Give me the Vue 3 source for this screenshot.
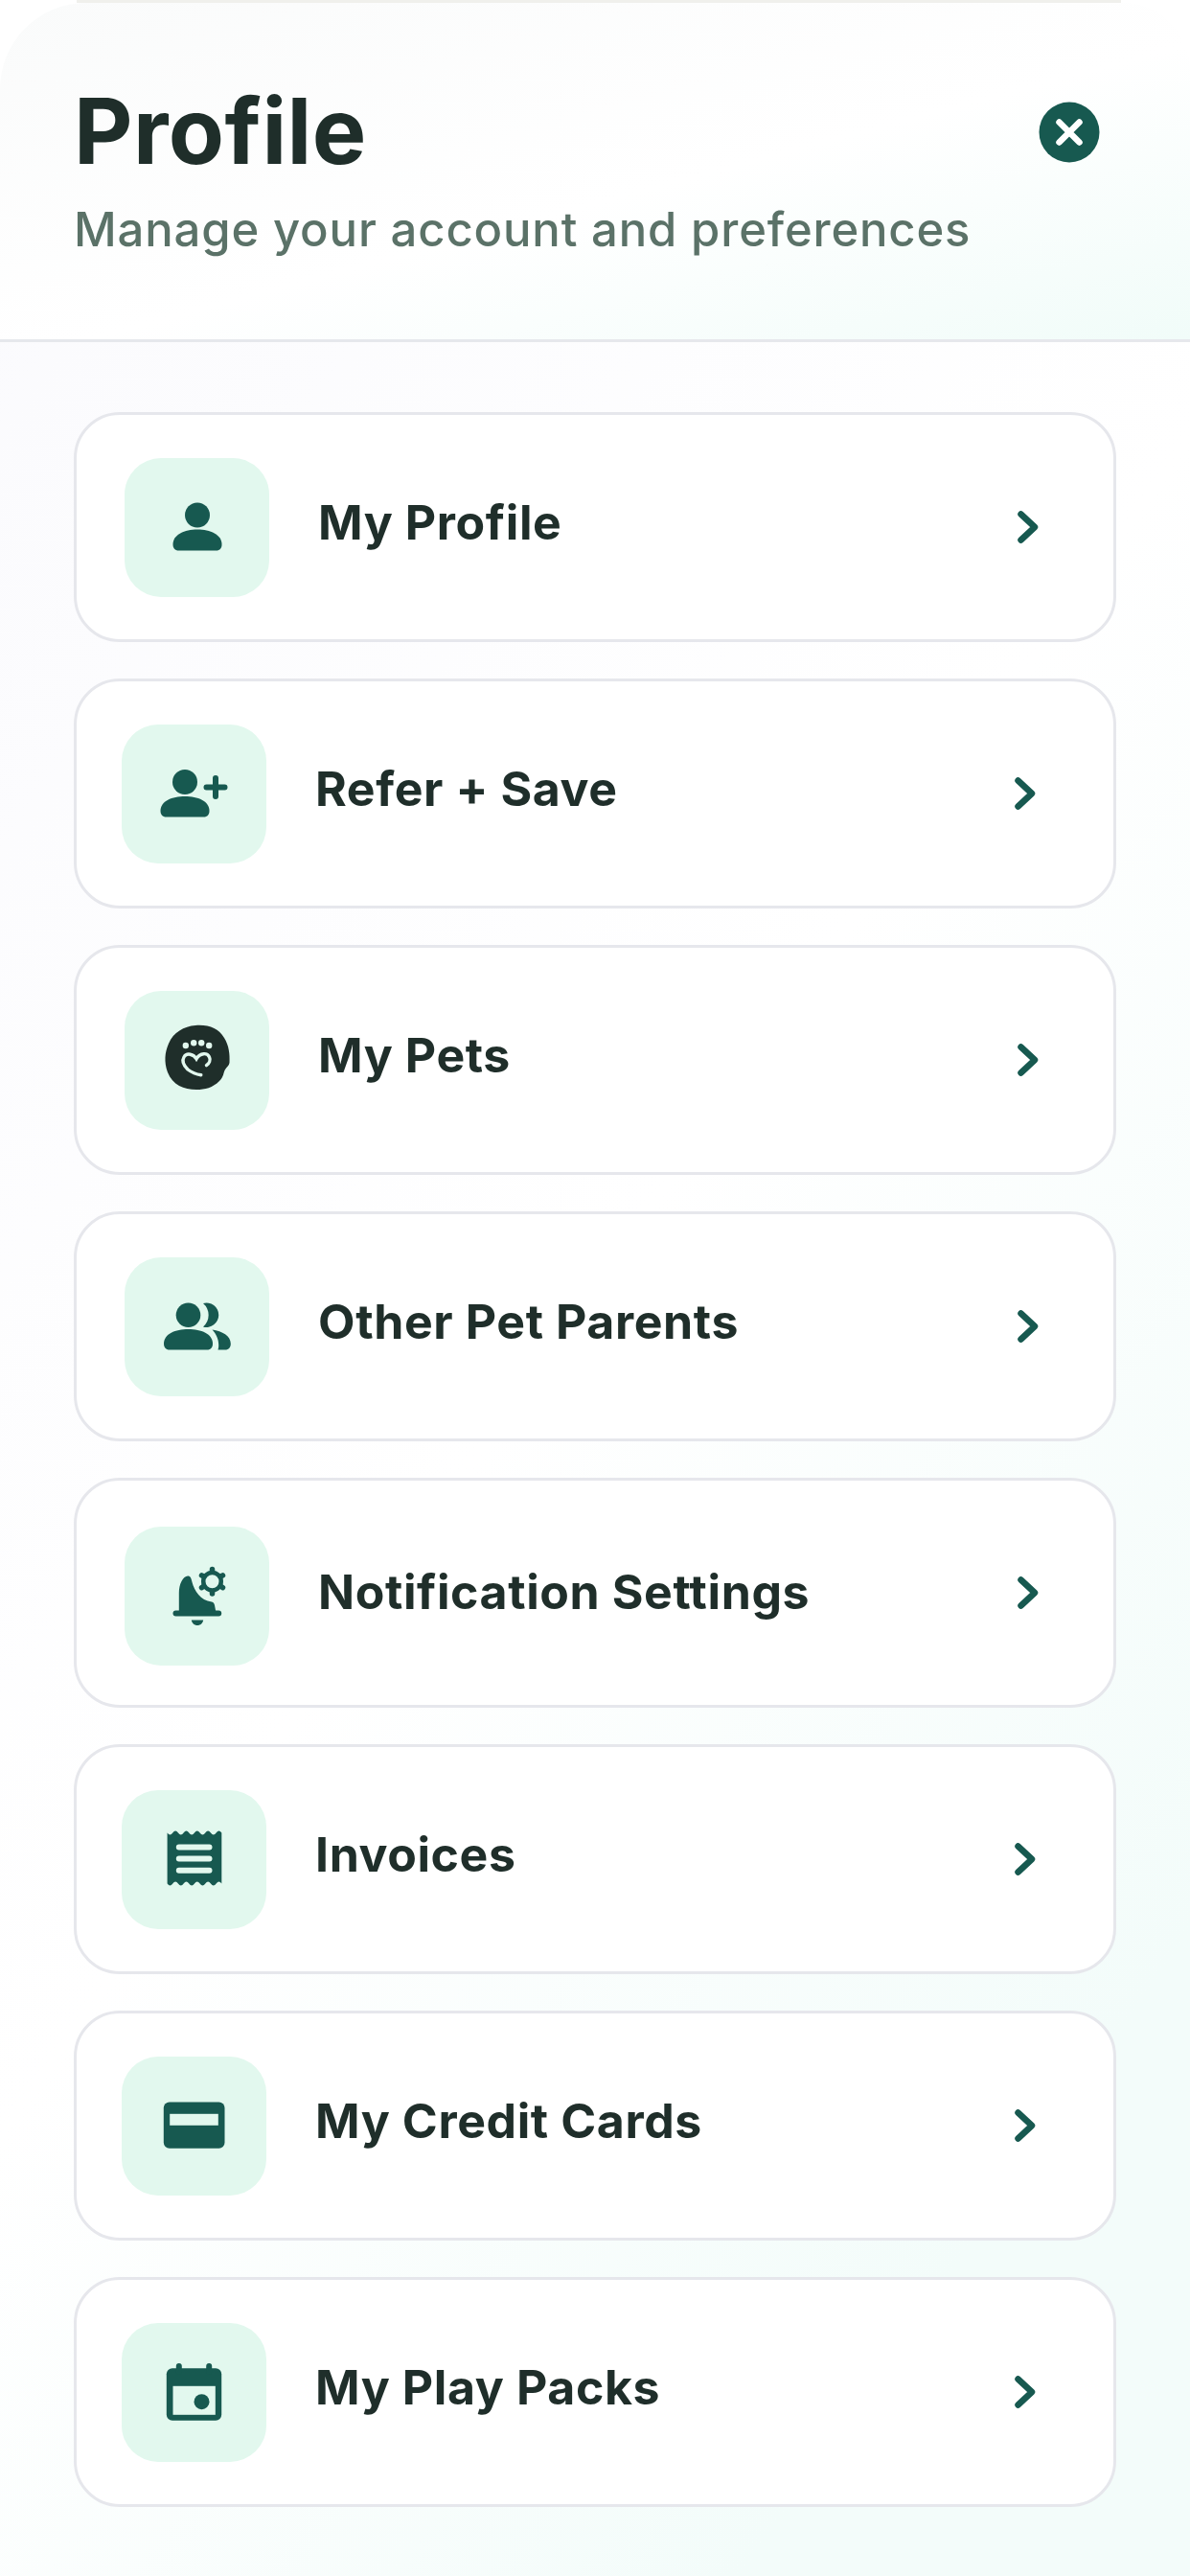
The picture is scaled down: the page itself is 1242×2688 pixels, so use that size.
<template>
  <div class="page">
    <div class="head-wrap">
      <div class="top-line"></div>
      <header class="sheet-head">
        <div class="head-text">
          <h1>Profile</h1>
          <p>Manage your account and preferences</p>
        </div>
        <button class="close-btn" aria-label="Close">
          <svg viewBox="0 0 64 64" width="64" height="64">
            <circle cx="32" cy="32" r="31.5" fill="#175950" />
            <path d="M21.5 21.5l21 21M42.5 21.5l-21 21" stroke="#fff" stroke-width="6.5" stroke-linecap="round" />
          </svg>
        </button>
      </header>
    </div>

    <main class="menu">
      <a v-for="item in items" :key="item.label" class="row" :class="{ shifted: item.shifted }">
        <span class="tile" :class="item.tileClass">
          <svg viewBox="-40 -40 80 80" width="80" height="80">
            <template v-if="item.icon === 'person'">
              <circle cy="-12.5" r="13" class="ink" />
              <path d="M-25.500 18c0-10 12-15.500 25.500-15.500s25.500 5.500 25.500 15.500c0 4-2 6.500-6 6.500h-39c-4 0-6-2.500-6-6.500z" class="ink" />
            </template>
            <template v-else-if="item.icon === 'refer'">
              <circle cx="-10" cy="-12" r="13" class="ink" />
              <path d="M-35.500 18c0-10 12-15 25.500-15s25.500 5 25.500 15c0 4-2 6.500-6 6.500h-39c-4 0-6-2.500-6-6.500z" class="ink" />
              <path d="M12.500-6.500h19M22-16v19" class="line" />
            </template>
            <template v-else-if="item.icon === 'pets'">
              <path d="M-2-36C12-37 22-33 28-23C33-15 34-6 33.500 3C33 6 31 7 29 10C27 13 28 17 23 22C16 29 8 31-1 31C-14 31-26 26-31 13C-35 2-34-8-30-17C-25-29-14-35-2-36z" fill="#1f2e2a" />
              <circle cx="-12.200" cy="-15" r="3.200" class="paper" />
              <circle cx="-3.800" cy="-17.700" r="3.200" class="paper" />
              <circle cx="4.200" cy="-17.700" r="3.200" class="paper" />
              <circle cx="12.200" cy="-15" r="3.200" class="paper" />
              <path d="M9.500 5.700C12.500 3.500 14 0 12.500-3C10.500-7.500 3-8-1-1C-4-6-11-8-14-3C-17 2-13 7-10 10C-6 13-1 15 3.800 15.700" fill="none" stroke="#e2f8ee" stroke-width="3.400" stroke-linecap="round" />
            </template>
            <template v-else-if="item.icon === 'parents'">
              <circle cx="-9.500" cy="-11.800" r="12.800" class="ink" />
              <path d="M-35 18c0-10 12-15 25.500-15s25.500 5 25.500 15c0 4-2 6.500-6 6.500h-39c-4 0-6-2.500-6-6.500z" class="ink" />
              <path d="M6-24A12.700 12.700 0 1 1 6 .4A16 16 0 0 0 6-24z" class="ink" />
              <path d="M15.500 3.500C26 5 34.800 10 34.800 18c0 4-2 6.500-6 6.500H21.500c.5-1.500.7-3 .7-5 0-6-2.500-11.500-6.700-16z" class="ink" />
            </template>
            <template v-else-if="item.icon === 'bell'">
              <path d="M-19.200 18V-3C-19.200-12-15-20.500-10-20.500C-7-20.500-6.500-18-5.500-14C-3-5 3 5 15 6.500C17 7 17.500 8 18 10L19.500 18z" class="ink" />
              <path d="M-22.500 18.500h44.700" class="line" />
              <path d="M-6.200 25.500h12.400c-.6 3.300-3 5.500-6.200 5.500s-5.600-2.200-6.200-5.500z" class="ink" />
              <g transform="translate(15.500 -14.800)">
                <circle r="9.250" fill="none" stroke="#175950" stroke-width="4.500" />
                <path v-for="deg in [0, 60, 120, 180, 240, 300]" :key="deg" d="M0-10.500v-2.200" class="tooth" :transform="`rotate(${deg})`" />
              </g>
            </template>
            <template v-else-if="item.icon === 'receipt'">
              <path d="M-28.400-27.500q2.835 4 5.670 0t5.670 0t5.670 0t5.670 0t5.670 0t5.670 0t5.670 0t5.670 0t5.670 0t5.670 0V25.500q-2.835-4-5.670 0t-5.670 0t-5.670 0t-5.670 0t-5.670 0t-5.670 0t-5.670 0t-5.670 0t-5.670 0t-5.670 0z" class="ink" />
              <path d="M-16.200-12.500h31.700M-16.200-.5h31.700M-16.200 11.800h31.700" class="cut" />
            </template>
            <template v-else-if="item.icon === 'card'">
              <rect x="-32.200" y="-24.500" width="63.700" height="48.300" rx="6" class="ink" />
              <rect x="-25.800" y="-12.200" width="50.600" height="12" class="paper" />
            </template>
            <template v-else-if="item.icon === 'calendar'">
              <rect x="-29.200" y="-24.800" width="57.400" height="54.600" rx="6" class="ink" />
              <rect x="-22.500" y="-6.200" width="44.300" height="30" class="paper" />
              <circle cx="7.500" cy="10.200" r="8" class="ink" />
              <path d="M-16.200-27v6M15.200-27v6" class="line" />
            </template>
          </svg>
        </span>
        <span class="label" :class="item.tileClass">{{ item.label }}</span>
        <svg class="chevron" viewBox="0 0 24 34" width="24" height="34">
          <path d="M3.500 3.500L18 17L3.500 30.500" fill="none" stroke="#175950" stroke-width="6.500" stroke-linecap="round" stroke-linejoin="round" />
        </svg>
      </a>
    </main>
  </div>
</template>

<script setup>
const items = [
  { label: 'My Profile', icon: 'person' },
  { label: 'Refer + Save', icon: 'refer', shifted: true },
  { label: 'My Pets', icon: 'pets' },
  { label: 'Other Pet Parents', icon: 'parents' },
  { label: 'Notification Settings', icon: 'bell', tileClass: 'low' },
  { label: 'Invoices', icon: 'receipt', shifted: true },
  { label: 'My Credit Cards', icon: 'card', shifted: true },
  { label: 'My Play Packs', icon: 'calendar', shifted: true }
]
</script>

<style>
html,
body {
  background: #fff;
}
</style>

<style scoped>
.page {
  width: 1242px;
  min-height: 2688px;
  box-sizing: border-box;
  font-family: Inter, "Liberation Sans", sans-serif;
  color: #1f2e2a;
  background: linear-gradient(125deg, #fafafd 0%, #ffffff 50%, #f3fcfa 85%, #f3fcfa 100%);
}

/* Header */
.head-wrap {
  background: #fff;
}

.top-line {
  height: 3px;
  margin: 0 72px 0 80px;
  background: #f0f0ec;
}

.sheet-head {
  display: flex;
  justify-content: space-between;
  align-items: flex-start;
  height: 354px;
  box-sizing: border-box;
  padding: 100px 94px 0 77px;
  background: linear-gradient(165deg, #fafbfb 0%, #ffffff 55%, #f1fcf9 100%);
  border-bottom: 3px solid #e6e8ec;
  border-radius: 90px 70px 0 0;
}

h1 {
  margin: 0;
  font-size: 95px;
  line-height: 68px;
  font-weight: 700;
  letter-spacing: 0.4px;
}

.head-text p {
  margin: 45px 0 0;
  font-size: 49px;
  line-height: 48px;
  font-weight: 500;
  letter-spacing: 0.85px;
  color: #5b7268;
}

.close-btn {
  margin-top: 3px;
  padding: 0;
  border: none;
  background: none;
  display: block;
}

.close-btn svg {
  display: block;
}

/* List */
.menu {
  display: flex;
  flex-direction: column;
  gap: 38px;
  padding: 73px 77px 0;
}

.row {
  display: flex;
  align-items: center;
  height: 240px;
  box-sizing: border-box;
  padding-left: 50px;
  background: #fff;
  border: 3px solid #e6e7ec;
  border-radius: 48px;
}

.row.shifted {
  padding-left: 47px;
}

.tile {
  flex: none;
  display: flex;
  align-items: center;
  justify-content: center;
  width: 151px;
  height: 145px;
  border-radius: 38px;
  background: #e2f8ee;
}

.tile.low {
  margin-top: 6px;
}

.label {
  flex: 1;
  margin-left: 51px;
  margin-bottom: 10px;
  font-size: 50px;
  line-height: 60px;
  font-weight: 700;
  letter-spacing: 0.6px;
}

.label.low {
  margin-top: 4px;
  margin-bottom: 6px;
}

.chevron {
  flex: none;
  margin-right: 76px;
}

.shifted .chevron {
  margin-right: 79px;
}

.ink {
  fill: #175950;
}

.paper {
  fill: #e2f8ee;
}

.line {
  fill: none;
  stroke: #175950;
  stroke-width: 6;
  stroke-linecap: round;
}

.tooth {
  fill: none;
  stroke: #175950;
  stroke-width: 5.500;
  stroke-linecap: round;
}

.cut {
  fill: none;
  stroke: #e2f8ee;
  stroke-width: 6;
  stroke-linecap: round;
}
</style>
